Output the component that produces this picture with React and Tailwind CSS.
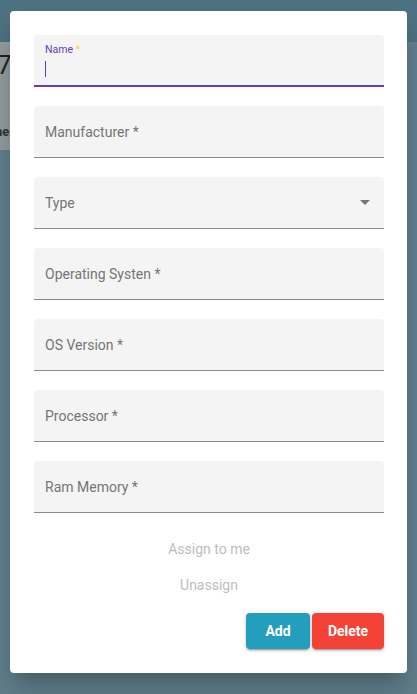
import React from 'react';

const fields = [
  { label: 'Manufacturer *' },
  { label: 'Type', select: true },
  { label: 'Operating Systen *' },
  { label: 'OS Version *' },
  { label: 'Processor *' },
  { label: 'Ram Memory *' },
];

function Field({ label, select }) {
  return (
    <div className="relative h-[52px] bg-[#f4f4f4] rounded-t-[4px] border-b border-[#8a8a8a] flex items-center pl-[11px] pr-[14px]">
      <span className="text-[14px] text-[#757575] pt-[2px]">{label}</span>
      {select && (
        <span className="ml-auto w-0 h-0 border-l-[5px] border-r-[5px] border-t-[5px] border-l-transparent border-r-transparent border-t-[#757575]" />
      )}
    </div>
  );
}

export default function App() {
  return (
    <div className="relative w-[417px] h-[694px] overflow-hidden bg-[#62808d] font-['Roboto',sans-serif]">
      {/* page behind the overlay */}
      <div className="h-[42px] bg-[#4d7282]" />
      <div className="w-[60px] h-[108px] bg-[#939c9f] flex flex-col">
        <span className="text-[26px] text-[#222] mt-[10px] ml-[-3px] leading-none">7</span>
        <span className="text-[13px] font-bold text-[#333] mt-[44px] ml-[-5px]">ne</span>
      </div>

      {/* dialog */}
      <div className="absolute left-[10px] top-[11px] w-[397px] h-[662px] bg-white rounded-[4px] shadow-[0_11px_15px_-7px_rgba(0,0,0,0.2),0_24px_38px_3px_rgba(0,0,0,0.14)] pl-[24px] pr-[23px] pt-[24px]">
        <div className="flex flex-col gap-[19px]">
          <div className="relative h-[52px] bg-[#f4f4f4] rounded-t-[4px] border-b-2 border-[#673ab7] pl-[11px] pt-[8px]">
            <div className="text-[10.5px] leading-[14px] text-[#673ab7]">
              Name<span className="text-[#ffd740]"> *</span>
            </div>
            <div className="w-px h-[16px] bg-[#673ab7] mt-[4px]" />
          </div>
          {fields.map((f) => (
            <Field key={f.label} {...f} />
          ))}
        </div>

        <div className="flex flex-col items-center mt-[18px] text-[14px] text-[#bdbdbd]">
          <div className="h-[36px] leading-[36px]">Assign to me</div>
          <div className="h-[36px] leading-[36px]">Unassign</div>
        </div>

        <div className="flex justify-end gap-[2px] mt-[10px]">
          <button className="w-[64px] h-[36px] rounded-[4px] bg-[#239fbd] text-white text-[14px] font-bold shadow-[0_3px_1px_-2px_rgba(0,0,0,0.2),0_2px_2px_0_rgba(0,0,0,0.14),0_1px_5px_0_rgba(0,0,0,0.12)]">
            Add
          </button>
          <button className="w-[72px] h-[36px] rounded-[4px] bg-[#f44336] text-white text-[14px] font-bold shadow-[0_3px_1px_-2px_rgba(0,0,0,0.2),0_2px_2px_0_rgba(0,0,0,0.14),0_1px_5px_0_rgba(0,0,0,0.12)]">
            Delete
          </button>
        </div>
      </div>
    </div>
  );
}
